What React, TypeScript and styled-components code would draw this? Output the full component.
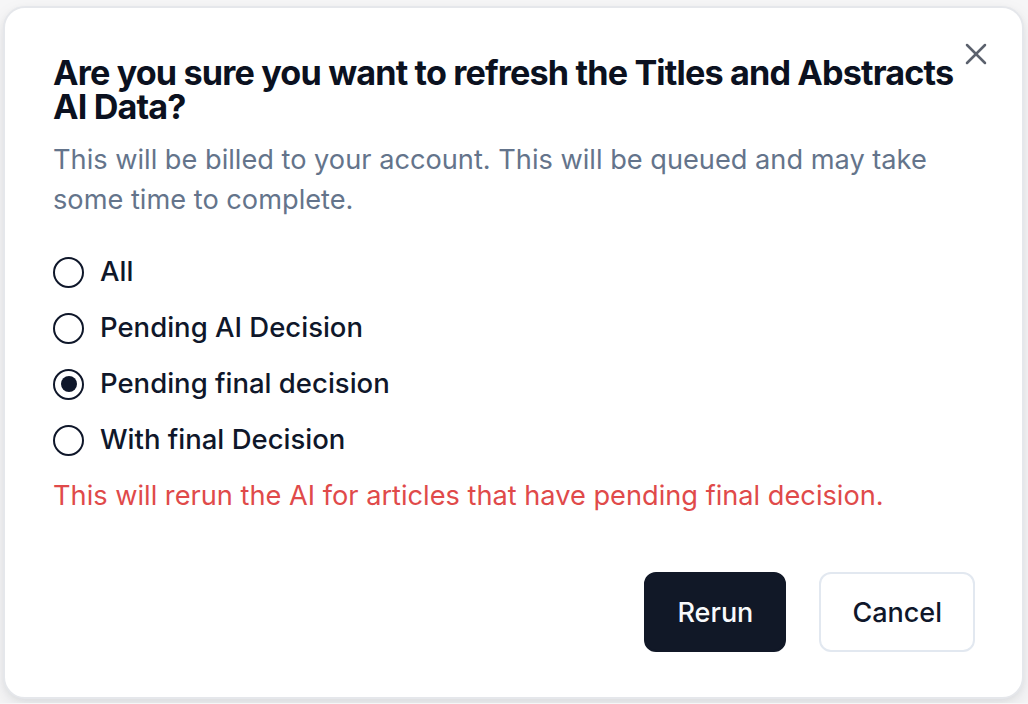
import { useState } from "react";
import styled, { createGlobalStyle } from "styled-components";

const GlobalStyle = createGlobalStyle`
  html, body {
    margin: 0;
    padding: 0;
    background: #f6f6f7;
    font-family: Inter, "Noto Sans", sans-serif;
    -webkit-font-smoothing: antialiased;
  }
`;

const Page = styled.div`
  padding: 6px 4px 4px 3px;
`;

const Dialog = styled.div`
  position: relative;
  box-sizing: border-box;
  width: 1021px;
  background: #ffffff;
  border: 2px solid #e5e7eb;
  border-radius: 22px;
  box-shadow: 0 8px 20px rgba(15, 23, 42, 0.08), 0 2px 6px rgba(15, 23, 42, 0.05);
  padding: 48px 47px 45px 48px;
  display: flex;
  flex-direction: column;
`;

const CloseButton = styled.button`
  position: absolute;
  top: 28px;
  right: 28px;
  width: 36px;
  height: 36px;
  padding: 0;
  border: none;
  background: transparent;
  color: #3f4654;
  opacity: 0.85;
  cursor: pointer;
  display: flex;
  align-items: center;
  justify-content: center;
`;

const Title = styled.h2`
  margin: 0;
  font-size: 34.2px;
  line-height: 34px;
  font-weight: 700;
  letter-spacing: -0.025em;
  color: #0b1120;
`;

const Description = styled.p`
  margin: 16px 0 0;
  font-size: 27.2px;
  line-height: 40px;
  color: #64748b;
`;

const RadioGroup = styled.div`
  margin-top: 36px;
  display: flex;
  flex-direction: column;
  gap: 24px;
`;

const RadioItem = styled.label`
  display: flex;
  align-items: center;
  gap: 16px;
  height: 32px;
  cursor: pointer;
`;

const RadioCircle = styled.span<{ $checked: boolean }>`
  box-sizing: border-box;
  width: 31px;
  height: 31px;
  border-radius: 50%;
  border: 2.5px solid #0f172a;
  display: flex;
  align-items: center;
  justify-content: center;

  &::after {
    content: "";
    width: 16px;
    height: 16px;
    border-radius: 50%;
    background: #0f172a;
    display: ${(p) => (p.$checked ? "block" : "none")};
  }
`;

const RadioLabel = styled.span`
  font-size: 27.5px;
  line-height: 1;
  font-weight: 500;
  color: #0f172a;
`;

const Warning = styled.p`
  margin: 20px 0 0;
  font-size: 27.2px;
  line-height: 40px;
  color: #e04a4a;
`;

const Footer = styled.div`
  margin-top: 56px;
  display: flex;
  justify-content: flex-end;
  gap: 33px;
`;

const Button = styled.button<{ $variant: "primary" | "outline" }>`
  box-sizing: border-box;
  height: 80px;
  padding: 0 31px;
  border-radius: 12px;
  font-family: inherit;
  font-size: 27px;
  font-weight: 500;
  cursor: pointer;
  border: 2px solid
    ${(p) => (p.$variant === "primary" ? "#111827" : "#e2e8f0")};
  background: ${(p) => (p.$variant === "primary" ? "#111827" : "#ffffff")};
  color: ${(p) => (p.$variant === "primary" ? "#f8fafc" : "#0f172a")};
`;

const options = [
  "All",
  "Pending AI Decision",
  "Pending final decision",
  "With final Decision",
];

const App = () => {
  const [selected, setSelected] = useState("Pending final decision");

  return (
    <Page>
      <GlobalStyle />
      <Dialog>
        <CloseButton aria-label="Close">
          <svg
            width="36"
            height="36"
            viewBox="0 0 24 24"
            fill="none"
            stroke="currentColor"
            strokeWidth="1.7"
            strokeLinecap="round"
            strokeLinejoin="round"
          >
            <path d="M18 6 6 18" />
            <path d="m6 6 12 12" />
          </svg>
        </CloseButton>
        <Title>
          Are you sure you want to refresh the Titles and Abstracts AI Data?
        </Title>
        <Description>
          This will be billed to your account. This will be queued and may take
          some time to complete.
        </Description>
        <RadioGroup>
          {options.map((option) => (
            <RadioItem key={option} onClick={() => setSelected(option)}>
              <RadioCircle $checked={selected === option} />
              <RadioLabel>{option}</RadioLabel>
            </RadioItem>
          ))}
        </RadioGroup>
        <Warning>
          This will rerun the AI for articles that have pending final decision.
        </Warning>
        <Footer>
          <Button $variant="primary">Rerun</Button>
          <Button $variant="outline">Cancel</Button>
        </Footer>
      </Dialog>
    </Page>
  );
};

export default App;
